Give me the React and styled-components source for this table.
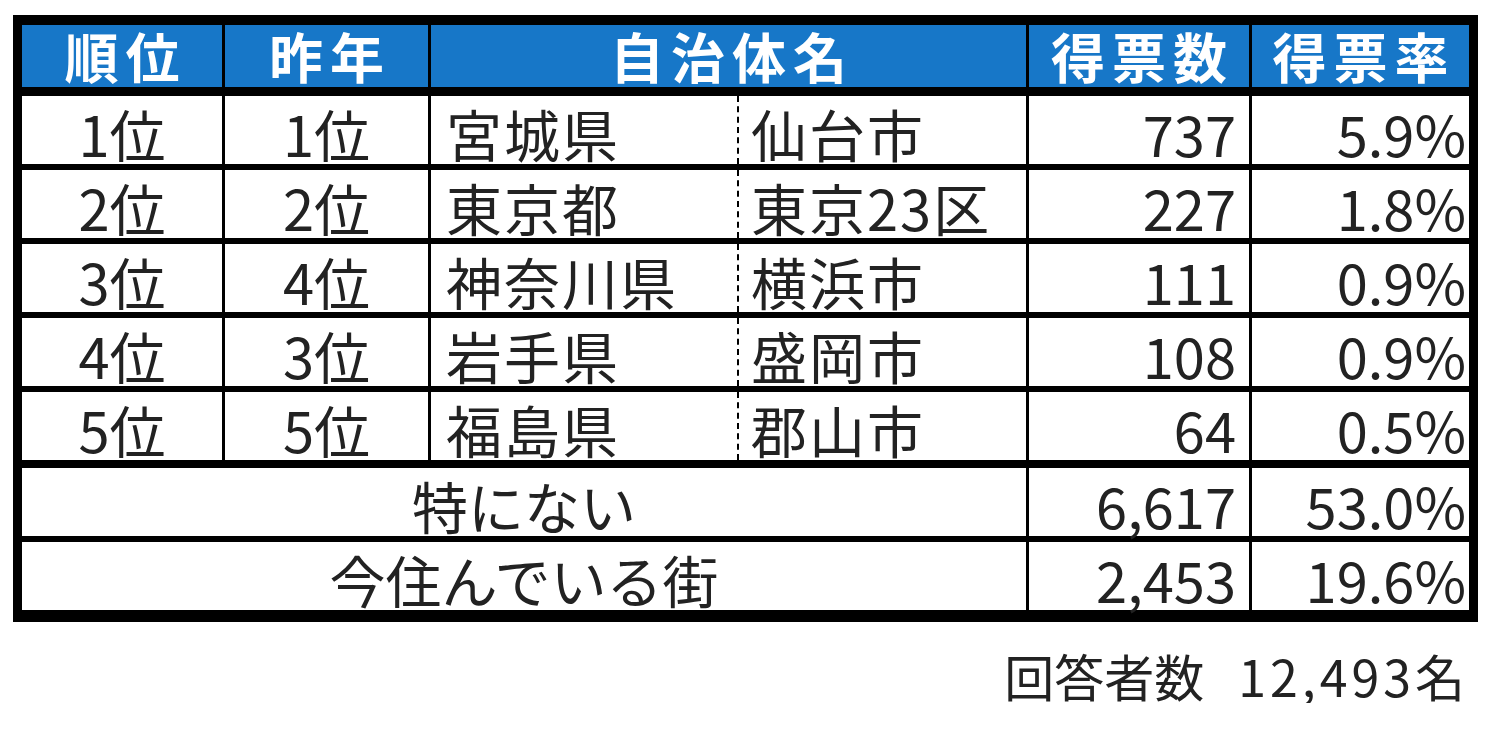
import React from 'react';
import styled, { createGlobalStyle } from 'styled-components';

const rows = [
  { rank: '1位', last: '1位', pref: '宮城県', city: '仙台市', votes: '737', rate: '5.9%' },
  { rank: '2位', last: '2位', pref: '東京都', city: '東京23区', votes: '227', rate: '1.8%' },
  { rank: '3位', last: '4位', pref: '神奈川県', city: '横浜市', votes: '111', rate: '0.9%' },
  { rank: '4位', last: '3位', pref: '岩手県', city: '盛岡市', votes: '108', rate: '0.9%' },
  { rank: '5位', last: '5位', pref: '福島県', city: '郡山市', votes: '64', rate: '0.5%' },
];

const extras = [
  { label: '特にない', votes: '6,617', rate: '53.0%', sep: 8 },
  { label: '今住んでいる街', votes: '2,453', rate: '19.6%', sep: 6 },
];

const App = () => {
  return (
    <>
      <GlobalStyle />
      <StPage>
        <StTable>
          <StHeadRow>
            <StHeadCell $w={203}>順位</StHeadCell>
            <StHeadCell $w={206}>昨年</StHeadCell>
            <StHeadCell $w={598}>自治体名</StHeadCell>
            <StHeadCell $w={223}>得票数</StHeadCell>
            <StHeadCell $w={217} $last>得票率</StHeadCell>
          </StHeadRow>
          {rows.map((r, i) => (
            <StRow key={r.rank} $sep={i === 0 ? 9 : 6}>
              <StCell $w={203} $align="center">{r.rank}</StCell>
              <StCell $w={206} $align="center">{r.last}</StCell>
              <StNameCell $w={306}>{r.pref}</StNameCell>
              <StCityCell $w={292}>{r.city}</StCityCell>
              <StCell $w={223} $align="flex-end" $pr={13}>{r.votes}</StCell>
              <StCell $w={217} $align="flex-end" $pr={3} $last>{r.rate}</StCell>
            </StRow>
          ))}
          {extras.map((e) => (
            <StRow key={e.label} $sep={e.sep}>
              <StCell $w={1007} $align="center">{e.label}</StCell>
              <StCell $w={223} $align="flex-end" $pr={13}>{e.votes}</StCell>
              <StCell $w={217} $align="flex-end" $pr={3} $last>{e.rate}</StCell>
            </StRow>
          ))}
        </StTable>
        <StFooter>
          <span>回答者数</span>
          <StCount>12,493名</StCount>
        </StFooter>
      </StPage>
    </>
  );
};

const GlobalStyle = createGlobalStyle`
  body {
    margin: 0;
    background: #fff;
    font-family: "Noto Sans CJK JP", "Noto Sans", sans-serif;
    color: #222;
  }
`;

const StPage = styled.div`
  display: flex;
  flex-direction: column;
  align-items: flex-start;
  padding: 15px 0 0 13px;
  width: 1465px;
`;

const StTable = styled.div`
  display: flex;
  flex-direction: column;
  width: 1447px;
  border: 9px solid #000;
  border-top-width: 10px;
  border-bottom-width: 12px;
  background: #000;
`;

const StHeadRow = styled.div`
  display: flex;
  height: 62px;
  background: #1777c8;
`;

const StHeadCell = styled.div`
  box-sizing: border-box;
  width: ${(p) => p.$w}px;
  display: flex;
  align-items: center;
  justify-content: center;
  padding-left: 7px;
  border-right: ${(p) => (p.$last ? 'none' : '3px solid #000')};
  color: #fff;
  font-size: 54px;
  font-weight: 700;
  letter-spacing: 7px;
  line-height: 1.2;
`;

const StRow = styled.div`
  display: flex;
  height: 68px;
  margin-top: ${(p) => p.$sep}px;
  background: #fff;
`;

const StCell = styled.div`
  box-sizing: border-box;
  width: ${(p) => p.$w}px;
  display: flex;
  align-items: center;
  justify-content: ${(p) => p.$align};
  padding: 6px ${(p) => p.$pr || 0}px 0 0;
  border-right: ${(p) => (p.$last ? 'none' : '3px solid #000')};
  font-size: 56px;
  line-height: 1.1;
`;

const StNameCell = styled(StCell)`
  justify-content: flex-start;
  padding-left: 15px;
  border-right: none;
  letter-spacing: 2px;
`;

const StCityCell = styled(StCell)`
  justify-content: flex-start;
  padding-left: 12px;
  border-left: 2px dashed #000;
  letter-spacing: 2px;
`;

const StFooter = styled.div`
  display: flex;
  gap: 34px;
  align-self: flex-end;
  margin-top: 26px;
  padding-right: 13px;
  font-size: 50px;
  line-height: 1.1;
  color: #222;
`;

const StCount = styled.span`
  letter-spacing: 4px;
  margin-right: -4px;
`;

export default App;
